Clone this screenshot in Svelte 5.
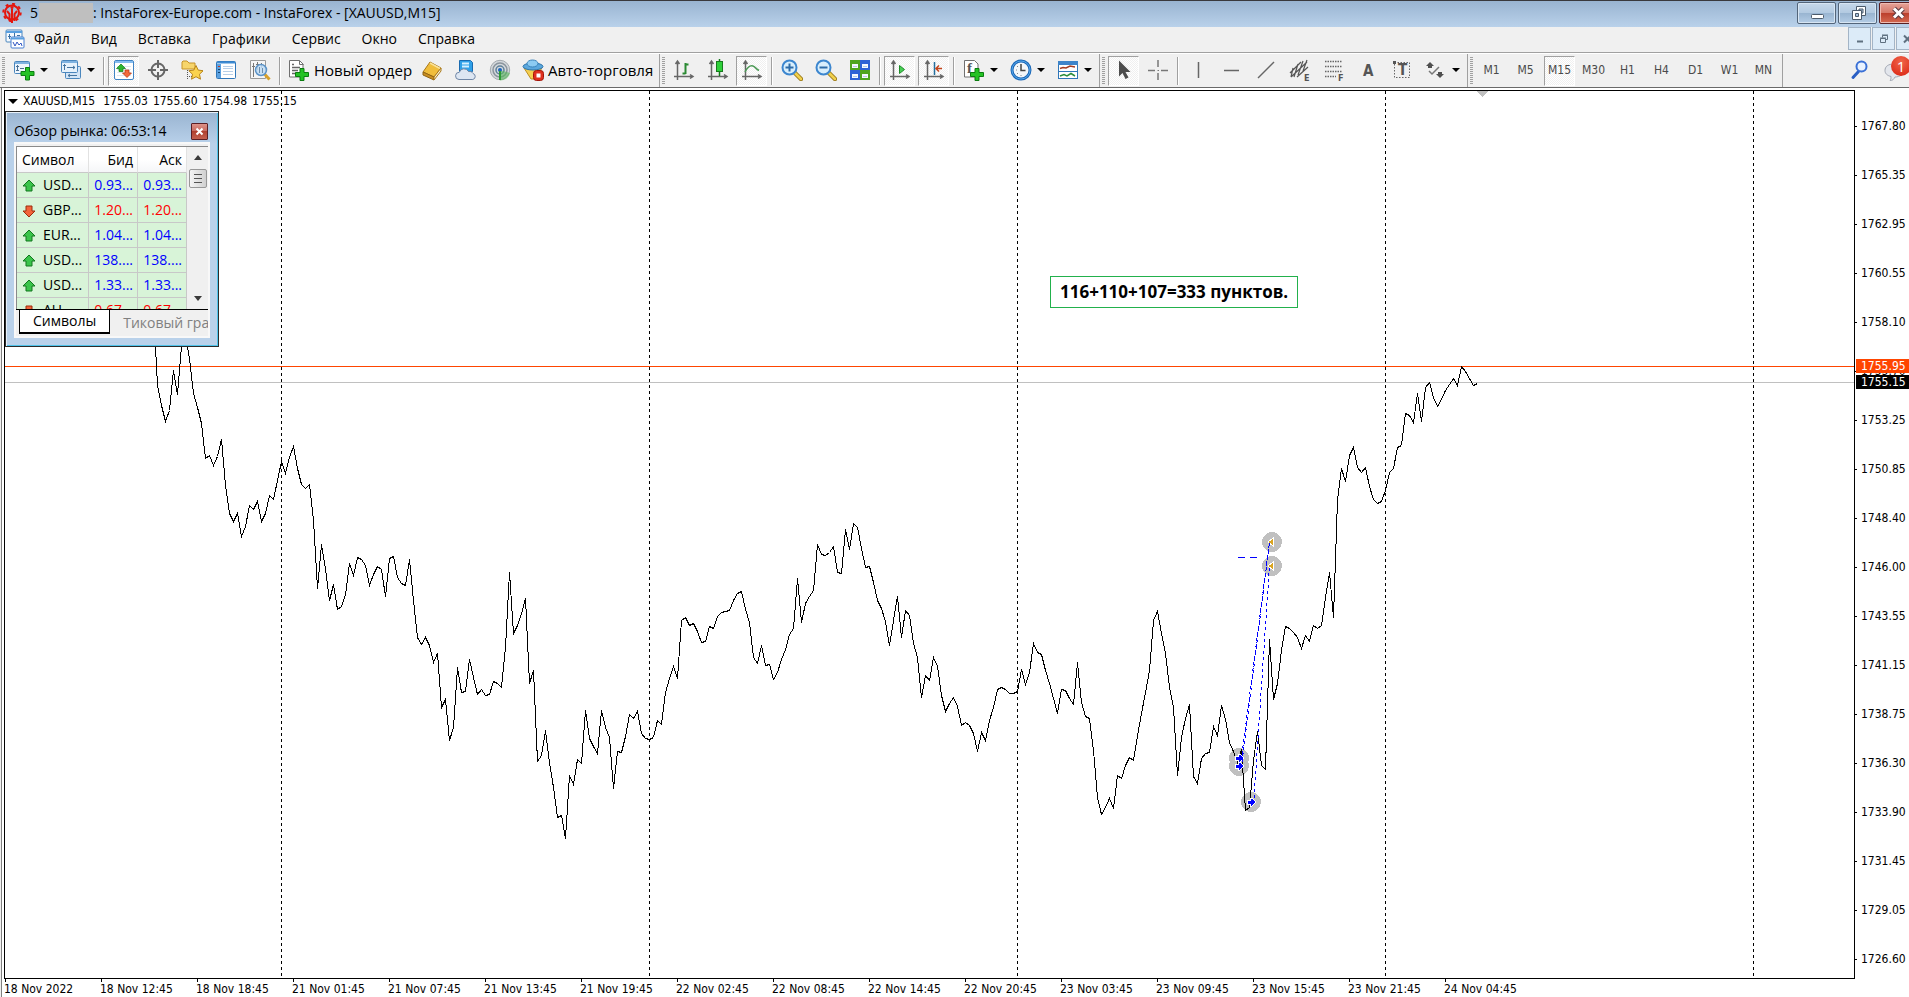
<script lang="ts">
  interface ToolItem {
    icon?: string;
    title?: string;
    text?: string;
    size?: string;
    drop?: boolean;
    pressed?: boolean;
    sep?: boolean;
  }

  interface QuoteRow {
    symbol: string;
    bid: string;
    ask: string;
    up: boolean;
  }

  const menu = ['Файл', 'Вид', 'Вставка', 'Графики', 'Сервис', 'Окно', 'Справка'];

  const toolbars: ToolItem[][] = [
    [
      { icon: 'new-chart', title: 'Новый график', drop: true },
      { icon: 'profiles', title: 'Профили', drop: true },
      { sep: true },
      { icon: 'market', title: 'Обзор рынка', pressed: true },
      { icon: 'target', title: 'Окно данных' },
      { icon: 'navigator', title: 'Навигатор' },
      { icon: 'terminal', title: 'Терминал' },
      { icon: 'tester', title: 'Тестер стратегий' },
      { sep: true },
      { icon: 'order', text: 'Новый ордер', size: 'order' },
      { icon: 'editor', title: 'MetaEditor' },
      { icon: 'cloud', title: 'Виртуальный хостинг' },
      { icon: 'signal', title: 'Сигналы' },
      { icon: 'auto', text: 'Авто-торговля', size: 'auto' },
    ],
    [
      { icon: 'bars', title: 'Бары' },
      { icon: 'candles', title: 'Японские свечи' },
      { icon: 'line', title: 'Линия', pressed: true },
      { sep: true },
      { icon: 'zoom-in', title: 'Увеличить' },
      { icon: 'zoom-out', title: 'Уменьшить' },
      { icon: 'tiles', title: 'Мозаика' },
      { sep: true },
      { icon: 'scroll', title: 'Автопрокрутка', pressed: true },
      { icon: 'shift', title: 'Сдвиг графика', pressed: true },
      { sep: true },
      { icon: 'indicator', title: 'Индикаторы', drop: true },
      { icon: 'clock', title: 'Периоды', drop: true },
      { icon: 'template', title: 'Шаблоны', drop: true },
    ],
    [
      { icon: 'cursor', title: 'Курсор', pressed: true },
      { icon: 'cross', title: 'Перекрестие' },
      { sep: true },
      { icon: 'vline', title: 'Вертикальная линия' },
      { icon: 'hline', title: 'Горизонтальная линия' },
      { icon: 'trend', title: 'Трендовая линия' },
      { icon: 'channel', title: 'Канал' },
      { icon: 'fibo', title: 'Фибоначчи' },
      { icon: 'text', title: 'Текст' },
      { icon: 'label', title: 'Метка' },
      { icon: 'shapes', title: 'Стрелки', drop: true },
    ],
    ['M1', 'M5', 'M15', 'M30', 'H1', 'H4', 'D1', 'W1', 'MN'].map((text) => ({
      text,
      size: 'frame',
      pressed: text === 'M15',
    })),
  ];

  const quotes: QuoteRow[] = [
    { symbol: 'USD...', bid: '0.93...', ask: '0.93...', up: true },
    { symbol: 'GBP...', bid: '1.20...', ask: '1.20...', up: false },
    { symbol: 'EUR...', bid: '1.04...', ask: '1.04...', up: true },
    { symbol: 'USD...', bid: '138....', ask: '138....', up: true },
    { symbol: 'USD...', bid: '1.33...', ask: '1.33...', up: true },
    { symbol: 'AU...', bid: '0.67...', ask: '0.67...', up: false },
  ];

  const lastBar = ['1755.03', '1755.60', '1754.98', '1755.15'];

  const prices = [
    '1767.80', '1765.35', '1762.95', '1760.55', '1758.10', '1755.70', '1753.25', '1750.85', '1748.40',
    '1746.00', '1743.55', '1741.15', '1738.75', '1736.30', '1733.90', '1731.45', '1729.05', '1726.60',
  ];

  const times = [
    '18 Nov 2022', '18 Nov 12:45', '18 Nov 18:45', '21 Nov 01:45', '21 Nov 07:45', '21 Nov 13:45',
    '21 Nov 19:45', '22 Nov 02:45', '22 Nov 08:45', '22 Nov 14:45', '22 Nov 20:45', '23 Nov 03:45',
    '23 Nov 09:45', '23 Nov 15:45', '23 Nov 21:45', '24 Nov 04:45',
  ];

  const dayLines = [276, 644, 1012, 1380, 1748];

  // one close per M15 bar, as a distance from the top of the plot
  const closes = [
    217, 294, 314, 330, 319, 279, 303, 255, 245, 267, 302, 316, 332, 367, 364, 374, 365, 348, 394, 422,
    430, 422, 445, 435, 414, 418, 410, 430, 422, 404, 408, 389, 370, 382, 366, 355, 377, 393, 397, 393,
    429, 497, 453, 477, 509, 493, 518, 515, 503, 472, 484, 466, 468, 474, 494, 483, 475, 478, 505, 467,
    465, 486, 492, 494, 468, 509, 546, 553, 546, 554, 571, 562, 616, 608, 649, 636, 576, 601, 600, 568,
    586, 603, 598, 604, 603, 590, 592, 596, 556, 481, 542, 534, 522, 507, 592, 579, 670, 664, 639, 671,
    696, 726, 724, 747, 684, 693, 668, 672, 619, 647, 655, 662, 619, 636, 646, 697, 660, 661, 645, 623,
    627, 620, 642, 647, 648, 646, 629, 633, 601, 587, 575, 587, 529, 526, 534, 532, 540, 551, 550, 535,
    537, 525, 521, 520, 519, 509, 502, 500, 518, 531, 566, 572, 554, 574, 573, 588, 581, 568, 558, 543,
    537, 487, 531, 512, 505, 499, 453, 463, 464, 461, 455, 481, 482, 438, 458, 432, 436, 457, 476, 475,
    491, 509, 517, 530, 554, 529, 505, 546, 519, 524, 552, 566, 606, 584, 589, 566, 575, 604, 620, 612,
    606, 615, 634, 631, 634, 642, 660, 641, 649, 629, 616, 598, 596, 598, 602, 602, 600, 578, 593, 581,
    552, 561, 563, 579, 592, 607, 622, 598, 599, 607, 613, 571, 611, 625, 627, 659, 706, 723, 716, 707,
    717, 684, 687, 674, 666, 669, 644, 622, 601, 579, 529, 520, 542, 562, 596, 616, 684, 646, 627, 613,
    685, 692, 667, 662, 661, 635, 644, 614, 628, 651, 660, 671, 658, 719, 716, 669, 640, 674, 678, 548,
    608, 592, 559, 535, 537, 541, 546, 557, 544, 550, 534, 537, 534, 506, 481, 526, 409, 377, 390, 364,
    356, 376, 381, 376, 395, 408, 412, 410, 399, 381, 377, 356, 354, 322, 324, 331, 302, 330, 296, 291,
    306, 315, 308, 299, 293, 287, 294, 275, 280, 287, 294, 292,
  ];

  const linePoints = closes.map((y, i) => `${148.5 + i * 4},${y + 0.5}`).join(' ');

  const entries = [
    { x: 1234, y: 667 },
    { x: 1234, y: 675 },
    { x: 1246, y: 711 },
  ];
  const exits = [
    { x: 1267, y: 451 },
    { x: 1267, y: 475 },
  ];
</script>

{#snippet icon(name: string)}
  <svg class="icon" viewBox="0 0 22 22" width="22" height="22" aria-hidden="true">
    {#if name === 'new-chart'}
      <rect x="1.5" y="2.5" width="15" height="12" rx="1" fill="#eef5fc" stroke="#4a86bd" />
      <path d="M2 4h14" stroke="#7fb2e0" stroke-width="2" />
      <path d="M4.5 6v6M3 7.5h3M3 11.5h3M7 9.5h4" stroke="#4a6f93" />
      <path d="M12.5 8.5h4v4h4.500v4h-4.500v4.500h-4v-4.500h-4.500v-4h4.500z" fill="#25c225" stroke="#0b7d10" />
    {:else if name === 'profiles'}
      <rect x="5.5" y="7.5" width="15" height="12" rx="1" fill="#d3e5f7" stroke="#4a86bd" />
      <rect x="1.5" y="1.5" width="16" height="12" rx="1" fill="#e6f1fb" stroke="#4a86bd" />
      <path d="M2 3h15" stroke="#7fb2e0" stroke-width="2" />
      <path d="M4.5 5v6M3 6.5h3M7 8.5h8M13 7l2 1.5-2 1.5M8 16.5h9M10 15l-2 1.5 2 1.5" fill="none" stroke="#47759f" />
    {:else if name === 'market'}
      <rect x="1.5" y="1.5" width="19" height="19" rx="1.5" fill="#fff" stroke="#3f83c4" />
      <path d="M2 3h18" stroke="#86bdf0" stroke-width="2" />
      <path d="M4 7.5h14M4 10.5h14M4 13.5h14M4 16.5h14" stroke="#dde6ef" />
      <path d="M8 5l4.500 4.500h-2.500v3h-4v-3h-2.500z" fill="#2fb52f" stroke="#0d7a12" stroke-width=".7" />
      <path d="M14 18.5l-4.500-4.500h2.500v-3h4v3h2.500z" fill="#f26a3c" stroke="#b8330c" stroke-width=".7" />
    {:else if name === 'target'}
      <circle cx="11" cy="11" r="6.5" fill="none" stroke="#666" stroke-width="2" />
      <path d="M11 1v8M11 13v8M1 11h8M13 11h8" stroke="#666" stroke-width="2" />
    {:else if name === 'navigator'}
      <path d="M1 10v-7l1-1h4l2 2h6v6z" fill="#f7d56b" stroke="#c6932a" />
      <path d="M6.5 11v10M8 17.5h3" stroke="#555" stroke-dasharray="1 1" />
      <path d="M15 6.5l2.200 4.600 5 .6-3.700 3.500 1 5-4.500-2.500-4.500 2.500 1-5-3.700-3.500 5-.6z" fill="#fbd34e" stroke="#b8851a" />
    {:else if name === 'terminal'}
      <rect x="1.5" y="2.5" width="19" height="17" rx="1" fill="#fff" stroke="#2f76b9" />
      <path d="M2 3.5h18" stroke="#3d8bd3" stroke-width="2" />
      <rect x="2" y="5" width="4" height="14" fill="#5aa0e0" />
      <path d="M3 7.5h2" stroke="#c23b22" />
      <path d="M3 10.5h2M3 13.5h2" stroke="#16456f" />
      <path d="M8 7.5h10M8 9.5h10M8 12.5h10M8 15.5h10" stroke="#b7cfe8" />
    {:else if name === 'tester'}
      <path d="M1.5 1.5h15v18h-15z" fill="#f5f5f5" stroke="#9a9a9a" />
      <path d="M4.5 4v14M8.5 3v8M12.5 4v5M3 7.5h3M7 5.5h3" stroke="#777" />
      <path d="M15.5 15l5 5.500" stroke="#d9a12a" stroke-width="3" />
      <circle cx="12" cy="11" r="5.5" fill="#bfdcf5" fill-opacity=".85" stroke="#5c93c7" stroke-width="1.5" />
      <path d="M10.5 8v6M13.5 9v5" stroke="#6d8eac" />
    {:else if name === 'order'}
      <path d="M1.5 1.5h10l3.500 3.500v13h-13.500z" fill="#fff" stroke="#707070" />
      <path d="M11.5 1.5v4h4" fill="none" stroke="#707070" />
      <path d="M4 5.5h2M4 8.5h8M4 11.5h6M4 14.5h4" stroke="#666" stroke-width="1.5" />
      <path d="M12 9.5h4v4h4.500v4h-4.500v4h-4v-4h-4.500v-4h4.500z" fill="#25c225" stroke="#0b7d10" />
    {:else if name === 'editor'}
      <path d="M2 13l7-10 11 6-7 9z" fill="#f0bd3c" stroke="#a9781a" />
      <path d="M2 13l11 5v3l-11-5z" fill="#c98e22" stroke="#8f6413" />
      <path d="M13 18l7-9v3l-7 9z" fill="#f9efcb" stroke="#a9781a" />
      <path d="M9 4l10 5.500" stroke="#fae39a" stroke-width="1.5" />
    {:else if name === 'cloud'}
      <path d="M4.5 1.5h11l2 2v9h-13z" fill="#2fa0e8" stroke="#1a6bb0" />
      <path d="M7 4.5h7M7 7.5h7" stroke="#d4efff" stroke-width="2" />
      <path d="M4 20.5a3.600 3.600 0 0 1 .3-7.200 5 5 0 0 1 9.200-.8 4 4 0 0 1 4.500 2 3.100 3.100 0 0 1-.2 6z" fill="#dde6f2" stroke="#6f86a6" />
    {:else if name === 'signal'}
      <circle cx="11" cy="11" r="9.7" fill="#d4d8dc" stroke="#a3a9ae" />
      <circle cx="11" cy="11" r="7" fill="none" stroke="#8a949c" stroke-width="1.5" />
      <circle cx="11" cy="11" r="4" fill="none" stroke="#5f8099" stroke-width="1.5" />
      <path d="M11 11v10.500c5 0 9-3 10-7.500z" fill="#58b85c" fill-opacity=".6" />
      <circle cx="11" cy="11" r="2" fill="#1b65bf" />
      <path d="M11 12v9" stroke="#2c9c35" stroke-width="2" />
    {:else if name === 'auto'}
      <path d="M2 9l18-1-5 12h-6z" fill="#f5cf4f" stroke="#bd8f22" />
      <ellipse cx="11" cy="7.5" rx="10" ry="3.5" fill="#5aa7dd" stroke="#2d74ab" />
      <ellipse cx="10.5" cy="4.5" rx="5.5" ry="3.5" fill="#8ccbf2" stroke="#3a83ba" />
      <rect x="11.5" y="11.5" width="10" height="10" rx="3" fill="#e0301e" stroke="#a21509" />
      <rect x="14.5" y="14.5" width="4" height="4" fill="#fff" />
    {:else if name === 'bars' || name === 'candles' || name === 'line' || name === 'scroll' || name === 'shift'}
      <path d="M4.5 3v18M1 17.5h18M2.5 5l2-3 2 3M17 15.5l3 2-3 2" fill="none" stroke="#666" stroke-width="1.5" />
      {#if name === 'bars'}
        <path d="M12.5 4v11M9.5 14.5h3M12.5 5.5h3" fill="none" stroke="#2b8a33" stroke-width="2" />
      {:else if name === 'candles'}
        <path d="M12.5 0v17" stroke="#177a1d" stroke-width="1.5" />
        <rect x="9.5" y="2.5" width="6" height="10" fill="#2ed03a" stroke="#177a1d" />
      {:else if name === 'line'}
        <path d="M4 13c2-4 5-7 8-6 2 .6 3 3 6 4.500" fill="none" stroke="#4e9a57" stroke-width="1.5" />
      {:else if name === 'scroll'}
        <path d="M10.5 6.5l5 4-5 4z" fill="#49cf55" stroke="#1c8a26" />
      {:else}
        <path d="M11.5 3v13" stroke="#256f9e" stroke-width="1.5" />
        <path d="M19 9.5h-5M16 6.5l-3 3 3 3" fill="none" stroke="#c3431b" stroke-width="1.5" />
      {/if}
    {:else if name === 'zoom-in' || name === 'zoom-out'}
      <path d="M14 14l6 6" stroke="#9a7a1c" stroke-width="4.500" stroke-linecap="round" />
      <path d="M14 14l6 6" stroke="#f0d04c" stroke-width="2.500" stroke-linecap="round" />
      <circle cx="8.5" cy="8.5" r="7" fill="#d8eefc" stroke="#3c86cf" stroke-width="2" />
      <path d={name === 'zoom-in' ? 'M4.5 8.5h8M8.5 4.5v8' : 'M4.5 8.5h8'} stroke="#2e6ca8" stroke-width="2" />
    {:else if name === 'tiles'}
      <rect x="1" y="1" width="10" height="10" fill="#4da51f" />
      <rect x="11" y="1" width="10" height="10" fill="#2d62d6" />
      <rect x="1" y="11" width="10" height="10" fill="#2d62d6" />
      <rect x="11" y="11" width="10" height="10" fill="#4da51f" />
      <path d="M3 5h6v4h-6zM13 5h6v4h-6zM3 15h6v4h-6zM13 15h6v4h-6z" fill="#f2f8ff" />
      <path d="M4 7.5h4M14 7.5h4M4 17.5h4M14 17.5h4" stroke="#b8cbe0" />
    {:else if name === 'indicator'}
      <path d="M1.5 1.5h10l3.500 3.500v13h-13.500z" fill="#fff" stroke="#707070" />
      <text x="4" y="14" class="glyph serif">f</text>
      <path d="M12 9.5h4v4h4.500v4h-4.500v4h-4v-4h-4.500v-4h4.500z" fill="#25c225" stroke="#0b7d10" />
    {:else if name === 'clock'}
      <circle cx="11" cy="11" r="9" fill="#f3f6f9" stroke="#1c68b8" stroke-width="3" />
      <circle cx="11" cy="11" r="9" fill="none" stroke="#57a9ec" />
      <path d="M11 5v6.500h4.500" fill="none" stroke="#444" stroke-width="1.5" />
      <path d="M6 11h1M11 16v1M7 7l1 1M7 15l1-1" stroke="#888" />
    {:else if name === 'template'}
      <rect x="1.5" y="2.5" width="19" height="17" fill="#fff" stroke="#2f76b9" />
      <path d="M1 4h20" stroke="#3d84ca" stroke-width="4" />
      <path d="M3 9.5l3-1 3 .5 4-2 5 1" fill="none" stroke="#a33b22" stroke-width="1.5" />
      <path d="M2 12.5h18" stroke="#2f76b9" />
      <path d="M3 17l4-1.500 3 1.500 4-2.500 4 2.500" fill="none" stroke="#2c8d3c" stroke-width="1.5" />
    {:else if name === 'cursor'}
      <path d="M6 1.5v16l3.500-3.500 3 6 3-1.500-3-5.500h5z" fill="#4d4d4d" />
    {:else if name === 'cross'}
      <path d="M11 1v7M11 14v7M1 11.5h7M14 11.5h7" stroke="#777" stroke-width="1.5" />
      <path d="M10.5 11.5h1.500" stroke="#777" />
    {:else if name === 'vline'}
      <path d="M11.5 3v16" stroke="#666" stroke-width="1.5" />
    {:else if name === 'hline'}
      <path d="M3 11.5h15" stroke="#666" stroke-width="1.5" />
    {:else if name === 'trend'}
      <path d="M3 19L19 3" stroke="#666" stroke-width="1.5" />
    {:else if name === 'channel'}
      <path d="M1 14L12 3M2 18L18 3M8 18L19 8M4 9l-2 9M9 5l-4 13M14 2l-5 14M18 1l-4 11" stroke="#555" stroke-width="1.2" />
      <text x="15" y="22" class="glyph small">E</text>
    {:else if name === 'fibo'}
      <path d="M2 2.5h17M2 7.5h17M2 12.5h17M2 17.5h11" stroke="#666" stroke-width="1.5" stroke-dasharray="1.5 1" />
      <text x="15" y="22" class="glyph small">F</text>
    {:else if name === 'text'}
      <text x="6" y="17" class="glyph">A</text>
    {:else if name === 'label'}
      <rect x="3.5" y="3.5" width="15" height="15" fill="none" stroke="#666" stroke-dasharray="1.5 1.5" />
      <text x="7" y="16" class="glyph">T</text>
      <path d="M2 2h3v3h-3z" fill="#555" />
    {:else if name === 'shapes'}
      <path d="M5 3l4 4h-2v2h-4v-2h-2zM15 19l-4-4h2v-2h4v2h2z" fill="#4f4f4f" />
      <path d="M4 12l3 3 7-7" fill="none" stroke="#777" stroke-width="1.5" />
    {/if}
  </svg>
{/snippet}

<div class="terminal">
  <header class="title-bar">
    <svg class="logo" viewBox="0 0 20 20" width="20" height="20" aria-hidden="true">
      <circle cx="10" cy="9.5" r="7" fill="none" stroke="#e3170f" stroke-width="2" />
      <circle cx="10" cy="9.5" r="8.7" fill="none" stroke="#e3170f" stroke-width="2" stroke-dasharray="3 3.800" />
      <path d="M10 6v14M5 8l2.500 3v7M15 8l-2.500 3v7" fill="none" stroke="#e3170f" stroke-width="2" />
      <circle cx="10" cy="4.5" r="1.5" fill="#e3170f" />
    </svg>
    <h1>5<span class="mask"></span>: InstaForex-Europe.com - InstaForex - [XAUUSD,M15]</h1>
    <div class="window-buttons">
      <button class="win-button" aria-label="Свернуть">
        <svg viewBox="0 0 20 20" width="20" height="20"><rect x="4.5" y="11.5" width="12" height="4" rx="1" fill="#fff" stroke="#4b5a6b" /></svg>
      </button>
      <button class="win-button" aria-label="Восстановить">
        <svg viewBox="0 0 20 20" width="20" height="20">
          <path d="M8.5 3.5h9v9h-9z" fill="#fff" stroke="#4b5a6b" />
          <path d="M11 6h4v4h-4z" fill="#a9c2dc" stroke="#4b5a6b" />
          <path d="M4.5 7.5h9v9h-9z" fill="#fff" stroke="#4b5a6b" />
          <path d="M7.5 10.5h3v3h-3z" fill="#a9c2dc" stroke="#4b5a6b" />
        </svg>
      </button>
      <button class="win-button win-close" aria-label="Закрыть">
        <svg viewBox="0 0 20 20" width="20" height="20">
          <path d="M5 5.5l9 9M14 5.5l-9 9" stroke="#5a3a40" stroke-width="5" />
          <path d="M5 5.5l9 9M14 5.5l-9 9" stroke="#fff" stroke-width="3" />
        </svg>
      </button>
    </div>
  </header>

  <nav class="menu-bar" aria-label="Меню">
    <svg class="menu-icon" viewBox="0 0 20 20" width="20" height="20" aria-hidden="true">
      <rect x="1" y="1" width="16" height="12" rx="1" fill="#f4f9fe" stroke="#4a86bd" />
      <path d="M1 3h16" stroke="#5aa0e0" stroke-width="2" />
      <path d="M4.5 5v5M3 7.5h3M9.5 4v5M12 6.5h3" stroke="#3c71a6" />
      <rect x="6" y="8" width="13" height="11" rx="1" fill="#fff" stroke="#4a7fd0" />
      <path d="M6 9.5h13" stroke="#5aa0e0" stroke-width="2" />
      <path d="M8 13l2 4 2-4 2 3 2-2 1 3" fill="none" stroke="#3358c4" />
    </svg>
    {#each menu as item}
      <button class="menu-item">{item}</button>
    {/each}
    <div class="mdi-buttons">
      <button class="mdi-button" aria-label="Свернуть график">
        <svg viewBox="0 0 12 12" width="12" height="12"><path d="M3 8.5h6" stroke="#5f7080" stroke-width="2" /></svg>
      </button>
      <button class="mdi-button" aria-label="Восстановить график">
        <svg viewBox="0 0 12 12" width="12" height="12"><path d="M2.5 5.5h5v4h-5zM2 5h6M4.5 4.5v-2h5v4h-2M4 2h6" fill="none" stroke="#5f7080" /></svg>
      </button>
      <button class="mdi-button" aria-label="Закрыть график">
        <svg viewBox="0 0 12 12" width="12" height="12"><path d="M2 2.5l7 7M9 2.5l-7 7" stroke="#5f7080" stroke-width="2" /></svg>
      </button>
    </div>
  </nav>

  <div class="tool-row">
    {#each toolbars as group}
      <div class="tool-group">
        <span class="grip"></span>
        {#each group as item}
          {#if item.sep}
            <span class="separator"></span>
          {:else}
            <button
              class={`tool-button ${item.size ?? ''}`}
              class:drop={item.drop}
              class:pressed={item.pressed}
              aria-label={item.text ?? item.title}
            >
              {#if item.icon}
                {@render icon(item.icon)}
              {/if}
              {#if item.text}
                <span>{item.text}</span>
              {/if}
              {#if item.drop}
                <span class="caret"></span>
              {/if}
            </button>
          {/if}
        {/each}
      </div>
    {/each}
    <div class="tool-end">
      <button class="tool-button" aria-label="Поиск">
        <svg class="icon" viewBox="0 0 22 22" width="22" height="22">
          <path d="M9.5 12.5l-5.500 6" stroke="#2a5fc4" stroke-width="3" stroke-linecap="round" />
          <circle cx="12.5" cy="7.5" r="5" fill="#e9f2ff" stroke="#3a70d6" stroke-width="2" />
        </svg>
      </button>
      <button class="tool-button chat" aria-label="Сообщения">
        <svg class="icon" viewBox="0 0 22 22" width="22" height="22">
          <path d="M11 5c6 0 10 2 10 6s-4 7-9 7c-1 2-3 4-5 4 1-1 1-3 1-4.500-4-1-6-3-6-6 0-4 3-6.500 9-6.500z" fill="#e3e6ec" stroke="#a2a7b3" />
        </svg>
        <span class="badge">1</span>
      </button>
    </div>
  </div>

  <main class="chart">
    <div class="plot">
      <svg class="canvas" shape-rendering="crispEdges" role="img" aria-label="XAUUSD,M15">
        {#each dayLines as x}
          <line x1={x + 0.5} y1="0" x2={x + 0.5} y2="100%" stroke="#000" stroke-dasharray="3 3" />
        {/each}
        <path d="M1472 0h11l-5.500 6z" fill="#c0c0c0" />
        <line x1="0" y1="291.5" x2="100%" y2="291.5" stroke="#c0c0c0" />
        <line x1="0" y1="275.5" x2="100%" y2="275.5" stroke="#ff4500" />
        {#each [...entries, ...exits] as mark}
          <circle cx={mark.x} cy={mark.y} r="10" fill="#c0c0c0" />
        {/each}
        <polyline points={linePoints} fill="none" stroke="#000" />
        {#each entries as mark}
          <path transform={`translate(${mark.x} ${mark.y})`} d="M-4-2h3v-2h2l4 4-4 4h-2v-2h-3z" fill="#00f" stroke="#fff" />
        {/each}
        {#each exits as mark}
          <path transform={`translate(${mark.x} ${mark.y})`} d="M-4 0l5-4v8z" fill="#daa520" stroke="#fff" />
        {/each}
        <path
          d="M1237 663L1264.500 451M1237 671L1264.500 451M1249 707L1264.500 475"
          fill="none"
          stroke="#00f"
          stroke-dasharray="3 3"
        />
        <path d="M1233 466.500h7M1245 466.500h7" stroke="#00f" />
      </svg>

      <p class="caption">
        <span class="caret"></span>
        <span class="caption-name">XAUUSD,M15</span>
        {#each lastBar as value}
          <span>{value}</span>
        {/each}
      </p>

      <p class="note">116+110+107=333 пунктов.</p>

      <section class="market-watch" aria-labelledby="market-heading">
        <header class="watch-header">
          <h2 id="market-heading">Обзор рынка: 06:53:14</h2>
          <button class="watch-close" aria-label="Закрыть">
            <svg viewBox="0 0 9 9" width="9" height="9"><path d="M1.5 1.5l6 6M7.5 1.5l-6 6" stroke="#fff" stroke-width="2" /></svg>
          </button>
        </header>
        <div class="watch-body">
          <div class="watch-list">
            <table>
              <thead>
                <tr><th class="symbol">Символ</th><th>Бид</th><th>Аск</th></tr>
              </thead>
              <tbody>
                {#each quotes as row}
                  <tr class={row.up ? 'up' : 'down'}>
                    <td class="symbol">
                      <svg viewBox="0 0 14 14" width="14" height="14" aria-hidden="true">
                        {#if row.up}
                          <path d="M7 1l6 6h-3v5h-6v-5h-3z" fill="#3ac44b" stroke="#12761f" />
                        {:else}
                          <path d="M7 13l-6-6h3v-5h6v5h3z" fill="#f2643a" stroke="#9c2c0c" />
                        {/if}
                      </svg>{row.symbol}
                    </td>
                    <td>{row.bid}</td>
                    <td>{row.ask}</td>
                  </tr>
                {/each}
              </tbody>
            </table>
            <div class="scrollbar">
              <span class="arrow arrow-up"></span>
              <span class="thumb"></span>
              <span class="arrow arrow-down"></span>
            </div>
          </div>
          <div class="tabs">
            <button class="tab active">Символы</button>
            <button class="tab">Тиковый график</button>
          </div>
        </div>
      </section>
    </div>

    <div class="price-axis">
      {#each prices as price}
        <span class="price">{price}</span>
      {/each}
      <span class="tag ask-tag">1755.95</span>
      <span class="tag bid-tag">1755.15</span>
    </div>

    <div class="time-axis">
      {#each times as time}
        <span class="time">{time}</span>
      {/each}
    </div>
  </main>
</div>

<style>
  :global(body) {
    background: #fff;
  }

  .terminal {
    display: flex;
    flex-direction: column;
    min-height: 100vh;
    overflow: hidden;
    background: #f0f0f0;
    color: #000;
    font-family: 'Open Sans', 'Noto Sans', sans-serif;
    font-size: 14px;
    line-height: 20px;
  }

  h1,
  h2,
  p {
    margin: 0;
    font-size: inherit;
    font-weight: 400;
  }

  button {
    margin: 0;
    padding: 0;
    border: 0;
    background: none;
    color: inherit;
    font: inherit;
  }

  svg {
    display: block;
    flex: none;
  }

  .glyph {
    fill: #555;
    font-family: 'DejaVu Sans Condensed', 'DejaVu Sans', sans-serif;
    font-size: 15px;
    font-weight: 700;
  }

  .glyph.small {
    font-size: 9px;
  }

  .glyph.serif {
    font-family: 'Liberation Serif', serif;
  }

  .title-bar {
    display: flex;
    align-items: center;
    box-sizing: border-box;
    height: 27px;
    padding: 0 0 2px 2px;
    border-top: 1px solid #39393d;
    background: linear-gradient(180deg, #99b4d1 0%, #b9d1ea 100%);
  }

  h1 {
    display: flex;
    margin-left: 8px;
    white-space: nowrap;
  }

  .mask {
    width: 54px;
    margin-left: 1px;
    background: #bfbfbf;
  }

  .window-buttons {
    display: flex;
    gap: 2px;
    margin: 0 -9px 0 auto;
  }

  .win-button {
    display: grid;
    place-items: center;
    box-sizing: border-box;
    width: 39px;
    height: 22px;
    border: 1px solid #53657a;
    border-radius: 2px;
    background: linear-gradient(180deg, #c6d8ea 0%, #b3cae1 48%, #98b4d0 50%, #b4cde6 100%);
    box-shadow: inset 0 0 0 1px #d7e5f3;
  }

  .win-close {
    border-color: #5a1f22;
    background: linear-gradient(180deg, #e6a398 0%, #d5796a 48%, #bb3e2b 50%, #d46a52 100%);
    box-shadow: inset 0 0 0 1px #eebbb2;
  }

  .menu-bar {
    display: flex;
    align-items: center;
    box-sizing: border-box;
    height: 26px;
    padding: 0 0 2px 5px;
    border-bottom: 1px solid #a0a0a0;
  }

  .menu-icon {
    margin-right: -1px;
  }

  .menu-item {
    padding: 0 11px 0 10px;
  }

  .mdi-buttons {
    display: flex;
    gap: 1px;
    margin: 0 -10px 0 auto;
  }

  .mdi-button {
    display: grid;
    place-items: center;
    box-sizing: border-box;
    width: 23px;
    height: 23px;
    border: 1px solid #a3b4c6;
    background: #dcebf8;
  }

  .tool-row {
    display: flex;
    height: 33px;
    border-top: 1px solid #fff;
    border-bottom: 1px solid #696969;
  }

  .tool-group {
    display: flex;
    align-items: center;
    gap: 3px;
    padding: 0 3px 0 2px;
    border-right: 1px solid #a0a0a0;
  }

  .grip {
    width: 3px;
    height: 28px;
    background: repeating-linear-gradient(180deg, #a0a0a0 0 1px, #f0f0f0 1px 2px);
  }

  .separator {
    width: 3px;
    height: 28px;
    background: linear-gradient(90deg, #f0f0f0 0 1px, #a0a0a0 1px 2px, #fff 2px 3px);
  }

  .tool-button {
    display: flex;
    align-items: center;
    justify-content: center;
    box-sizing: border-box;
    width: 31px;
    height: 30px;
    padding-bottom: 2px;
    white-space: nowrap;
  }

  .tool-button.drop {
    width: 44px;
    gap: 5px;
  }

  .tool-button.order,
  .tool-button.auto {
    justify-content: flex-start;
    gap: 4px;
    padding-left: 4px;
    font-size: 15px;
  }

  .tool-button.order {
    width: 129px;
  }

  .tool-button.auto {
    width: 138px;
  }

  .tool-button.frame {
    color: #4a4a4a;
    font-family: 'DejaVu Sans Condensed', 'DejaVu Sans', sans-serif;
    font-size: 12px;
  }

  .tool-button.pressed {
    border: 1px solid;
    border-color: #a0a0a0 #fff #fff #a0a0a0;
    background: repeating-conic-gradient(#fff 0 25%, #f0f0f0 0 50%) 0 0 / 2px 2px;
  }

  .caret {
    border: 4px solid transparent;
    border-top-color: #000;
    border-bottom: 0;
  }

  .tool-end {
    display: flex;
    align-items: center;
    gap: 3px;
    margin-left: auto;
  }

  .chat {
    position: relative;
  }

  .badge {
    position: absolute;
    top: 0;
    right: -2px;
    width: 20px;
    height: 20px;
    border-radius: 50%;
    background: radial-gradient(circle at 50% 30%, #f0654a, #d9200f);
    color: #fff;
    font-size: 15px;
    text-align: center;
  }

  .chart {
    display: grid;
    flex: 1;
    grid-template-columns: minmax(0, 1fr) 54px;
    grid-template-rows: minmax(0, 1fr) 18px;
    padding: 2px 0 0 2px;
    margin-left: 1px;
    border-left: 1px solid #808080;
    background: #fff;
    font-family: 'DejaVu Sans Condensed', 'DejaVu Sans', sans-serif;
    font-size: 12px;
    line-height: 14px;
  }

  .plot {
    position: relative;
    display: flex;
    border: 1px solid #000;
  }

  .canvas {
    flex: 1;
    width: 100%;
    min-width: 0;
  }

  .caption {
    position: absolute;
    top: 3px;
    left: 3px;
    display: flex;
    align-items: center;
    gap: 5px;
    white-space: nowrap;
  }

  .caption .caret {
    border-width: 5px;
    border-bottom: 0;
  }

  .caption-name {
    margin-right: 3px;
  }

  .note {
    position: absolute;
    top: 185px;
    left: 1045px;
    padding: 3px 9px;
    border: 1px solid #22b14c;
    background: #fff;
    font-family: 'Open Sans', 'Noto Sans', sans-serif;
    font-size: 17px;
    font-weight: 700;
    line-height: 24px;
    white-space: nowrap;
  }

  .market-watch {
    position: absolute;
    top: 20px;
    left: 0;
    box-sizing: border-box;
    width: 214px;
    padding: 0 8px 8px;
    border: 1px solid #2b2b2b;
    background: linear-gradient(180deg, #99b4d1 0, #b9d1ea 32px);
    box-shadow: inset 1px 1px 0 #e8f1fa, inset -1px -1px 0 #4fc3ea;
    font-family: 'Open Sans', 'Noto Sans', sans-serif;
    font-size: 14px;
    line-height: 20px;
  }

  .watch-header {
    display: flex;
    align-items: center;
    justify-content: space-between;
    height: 22px;
    padding-top: 8px;
    white-space: nowrap;
  }

  .watch-close {
    display: grid;
    place-items: center;
    box-sizing: border-box;
    width: 17px;
    height: 17px;
    margin-right: 2px;
    border: 1px solid #5b1f24;
    border-radius: 1px;
    background: linear-gradient(180deg, #dd9188 0%, #c76a5e 48%, #b0402f 50%, #c4604f 100%);
  }

  .watch-body {
    padding: 2px 0 1px;
    border: 2px solid #f8f8f8;
    background: #f0f0f0;
  }

  .watch-list {
    display: flex;
    height: 162px;
    overflow: hidden;
    border-top: 1px solid #8a8a8a;
    border-left: 1px solid #8a8a8a;
  }

  table {
    flex: none;
    align-self: flex-start;
    width: 170px;
    border-collapse: separate;
    border-spacing: 0;
    table-layout: fixed;
  }

  th,
  td {
    box-sizing: border-box;
    height: 25px;
    padding: 0 4px;
    overflow: hidden;
    border-right: 1px solid #c8c8c8;
    border-bottom: 1px solid #c8c8c8;
    font-weight: 400;
    text-align: right;
    white-space: nowrap;
  }

  th {
    height: 26px;
    border-right-color: #e2e2e2;
    background: linear-gradient(180deg, #fff 50%, #f5f6f8 100%);
  }

  td {
    background: #d8f4d8;
  }

  .symbol {
    width: 72px;
    padding-left: 5px;
    text-align: left;
  }

  td.symbol svg {
    display: inline-block;
    margin-right: 7px;
    vertical-align: -3px;
  }

  .up td:not(.symbol) {
    color: #00f;
  }

  .down td:not(.symbol) {
    color: #f00;
  }

  .scrollbar {
    display: flex;
    flex: 1;
    flex-direction: column;
    align-items: center;
    padding: 8px 2px;
  }

  .arrow {
    border: 4px solid transparent;
  }

  .arrow-up {
    border-top: 0;
    border-bottom: 5px solid #3a3a3a;
  }

  .arrow-down {
    margin-top: auto;
    border-top: 5px solid #3a3a3a;
    border-bottom: 0;
  }

  .thumb {
    width: 16px;
    height: 17px;
    margin-top: 9px;
    border: 1px solid #979797;
    border-radius: 2px;
    background:
      repeating-linear-gradient(180deg, #555 0 1px, transparent 1px 4px) center 4px / 8px 10px no-repeat,
      linear-gradient(90deg, #f5f5f5, #d0d0d0);
  }

  .tabs {
    display: flex;
    overflow: hidden;
    padding-left: 3px;
    border-top: 1px solid #000;
  }

  .tab {
    flex: none;
    height: 25px;
    padding: 0 13px;
    color: #808080;
  }

  .tab.active {
    margin-top: -1px;
    border: 1px solid #000;
    border-top-color: #fff;
    border-bottom-width: 2px;
    background: #fff;
    color: #000;
  }

  .price-axis {
    position: relative;
    display: flex;
    flex-direction: column;
    box-sizing: border-box;
    height: 0;
    min-height: 100%;
    padding-top: 12px;
    overflow: hidden;
  }

  .price {
    position: relative;
    flex: none;
    height: 49px;
    padding-left: 6px;
    line-height: 49px;
  }

  .price::before {
    position: absolute;
    top: 24px;
    left: 0;
    width: 2px;
    height: 1px;
    background: #000;
    content: '';
  }

  .tag {
    position: absolute;
    right: 0;
    left: 1px;
    padding-left: 5px;
    color: #fff;
  }

  .ask-tag {
    top: 269px;
    background: #ff4500;
  }

  .bid-tag {
    top: 285px;
    background: #000;
  }

  .time-axis {
    display: flex;
    grid-column: 1 / -1;
    overflow: hidden;
  }

  .time {
    position: relative;
    flex: none;
    width: 96px;
    padding-top: 3px;
    white-space: nowrap;
  }

  .time::before {
    position: absolute;
    top: 0;
    left: 1px;
    width: 1px;
    height: 3px;
    background: #000;
    content: '';
  }
</style>
